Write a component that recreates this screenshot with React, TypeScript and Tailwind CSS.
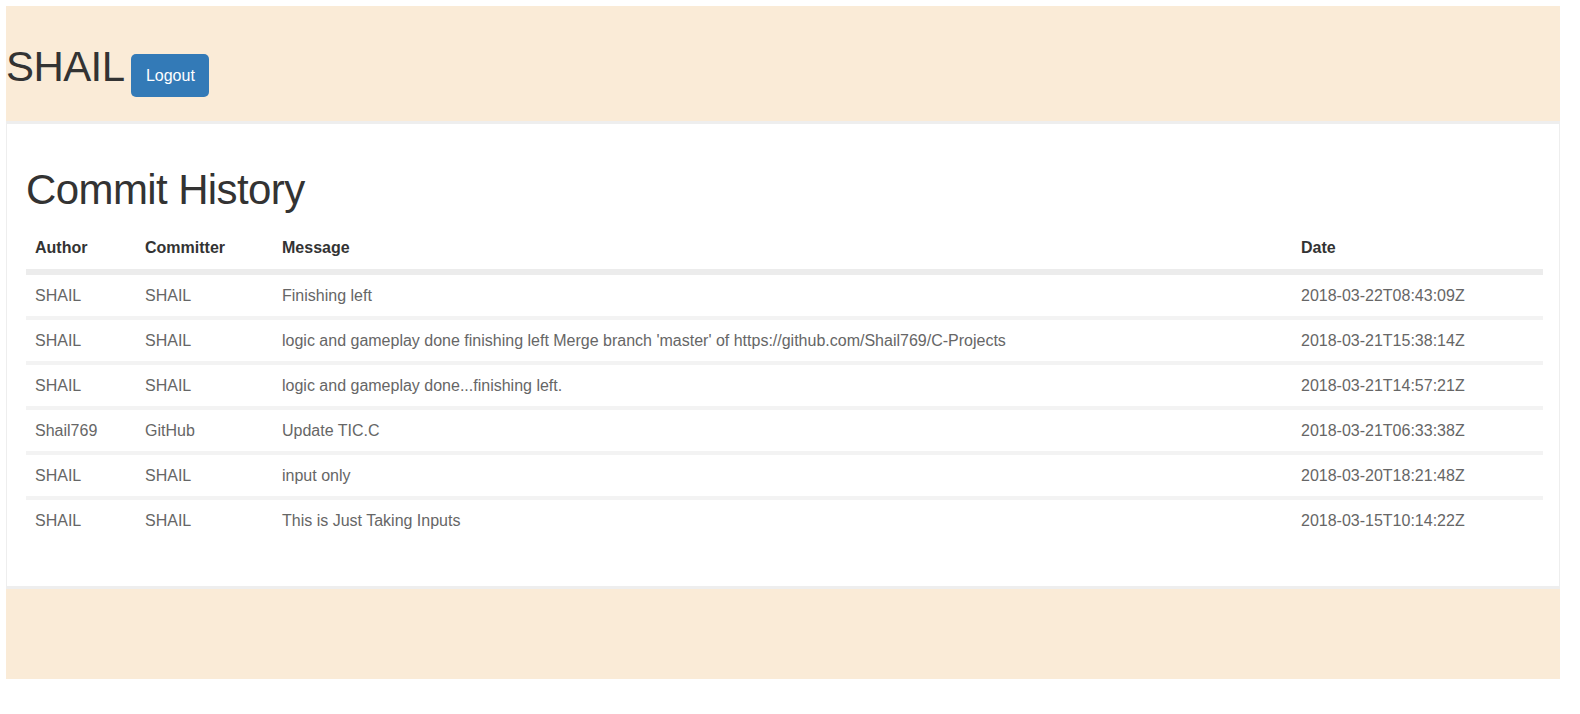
const commits = [
  { author: 'SHAIL', committer: 'SHAIL', message: 'Finishing left', date: '2018-03-22T08:43:09Z' },
  {
    author: 'SHAIL',
    committer: 'SHAIL',
    message: "logic and gameplay done finishing left Merge branch 'master' of https://github.com/Shail769/C-Projects",
    date: '2018-03-21T15:38:14Z',
  },
  { author: 'SHAIL', committer: 'SHAIL', message: 'logic and gameplay done...finishing left.', date: '2018-03-21T14:57:21Z' },
  { author: 'Shail769', committer: 'GitHub', message: 'Update TIC.C', date: '2018-03-21T06:33:38Z' },
  { author: 'SHAIL', committer: 'SHAIL', message: 'input only', date: '2018-03-20T18:21:48Z' },
  { author: 'SHAIL', committer: 'SHAIL', message: 'This is Just Taking Inputs', date: '2018-03-15T10:14:22Z' },
];

const App = () => {
  return (
    <div className="w-[1580px] h-[714px] bg-white pt-[6px] pl-[6px] font-['Liberation_Sans',Arial,sans-serif]">
      <div className="w-[1554px]">
        <header className="h-[115px] bg-[#faebd7] flex items-start">
          <h1 className="mt-[40px] text-[42px] leading-none tracking-[-0.6px] text-[#333]">SHAIL</h1>
          <button className="mt-[48px] ml-[7px] w-[78px] h-[43px] rounded-[5px] bg-[#337ab7] text-white text-[16px] leading-none">
            Logout
          </button>
        </header>

        <main className="bg-white border-t-[3px] border-x border-b-[3px] border-[#eeeeee] px-[19px] pb-[45px]">
          <h2 className="mt-[45px] mb-[17px] text-[42px] leading-none tracking-[-0.6px] text-[#333]">Commit History</h2>

          <table className="w-[1517px] table-fixed text-[16px] leading-[20px]">
            <thead>
              <tr className="text-left text-[#333] font-bold">
                <th className="w-[110px] pl-[9px] pt-[10px] pb-[11px] border-b-[6px] border-[#ececec]">Author</th>
                <th className="w-[137px] pl-[9px] pt-[10px] pb-[11px] border-b-[6px] border-[#ececec]">Committer</th>
                <th className="pl-[9px] pt-[10px] pb-[11px] border-b-[6px] border-[#ececec]">Message</th>
                <th className="w-[251px] pl-[9px] pt-[10px] pb-[11px] border-b-[6px] border-[#ececec]">Date</th>
              </tr>
            </thead>
            <tbody className="text-[#666]">
              {commits.map(({ author, committer, message, date }, i) => (
                <tr key={date} className={i === 0 ? '' : 'border-t-4 border-[#f3f3f3]'}>
                  <td className="pl-[9px] pt-[11px] pb-[10px]">{author}</td>
                  <td className="pl-[9px] pt-[11px] pb-[10px]">{committer}</td>
                  <td className="pl-[9px] pt-[11px] pb-[10px] whitespace-nowrap">{message}</td>
                  <td className="pl-[9px] pt-[11px] pb-[10px]">{date}</td>
                </tr>
              ))}
            </tbody>
          </table>
        </main>

        <footer className="h-[90px] bg-[#faebd7]" />
      </div>
    </div>
  );
};

export default App;
